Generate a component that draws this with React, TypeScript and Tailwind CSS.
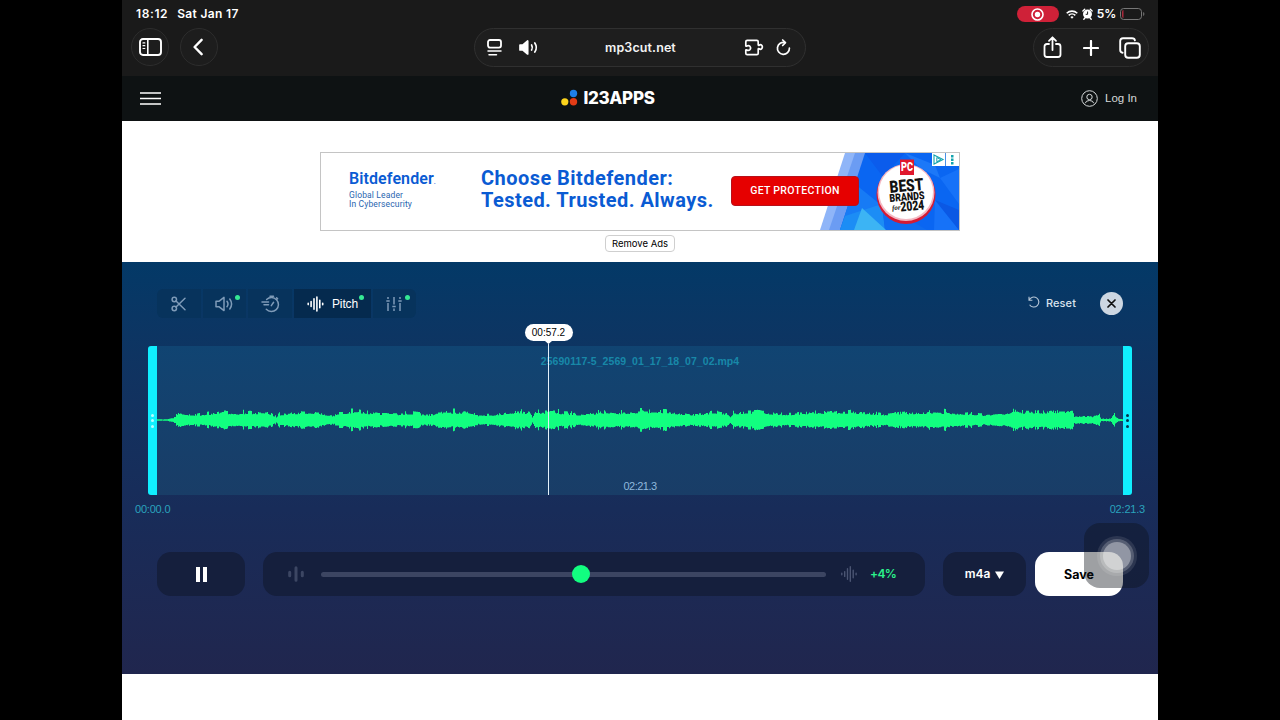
import type { ReactNode } from "react";
import { clsx } from "clsx";

const SANS = "font-['Inter','Liberation_Sans',sans-serif]";
const ARIAL = "font-['Liberation_Sans',Arial,sans-serif]";
const AD_FONT = "font-['Roboto','Open_Sans',sans-serif]";

const WAVE_WIDTH = 966;

// [x, half height] control points of the loudness envelope
const ENVELOPE: [number, number][] = [
  [0, 0.8], [9, 0.8], [17, 2.5], [20, 6], [23, 8], [28, 6.5], [40, 5], [58, 7.5], [64, 9],
  [76, 6.5], [92, 8], [102, 7.5], [113, 7], [119, 3], [122, 6], [135, 7], [147, 8.5], [162, 7],
  [177, 4.5], [180, 7.5], [202, 9], [222, 6.5], [240, 6], [252, 7.5], [275, 5], [280, 8], [302, 8.5],
  [315, 7], [319, 5], [325, 5], [345, 6.5], [362, 9], [374, 6.5], [375, 3], [379, 8.5], [396, 8.5],
  [415, 6.5], [432, 5.5], [444, 8.5], [465, 7.5], [482, 9], [505, 9], [520, 7.5], [534, 5.5], [556, 7.5],
  [571, 6], [573, 3.5], [576, 7.5], [600, 8.5], [624, 6], [645, 7], [670, 8.5], [705, 8],
  [725, 6], [750, 7.5], [775, 8.5], [790, 8], [825, 5.5], [848, 7], [860, 11], [864, 8.5],
  [880, 8], [895, 9], [915, 9], [917, 4], [926, 4], [936, 3.5], [941, 6.5], [944, 1.2], [953, 1.5],
  [957, 5.5], [961, 1.5], [965, 1],
];

function envelopeAt(x: number): number {
  const i = ENVELOPE.findIndex(([px]) => px >= x);
  if (i <= 0) return ENVELOPE[0][1];
  const [x0, y0] = ENVELOPE[i - 1];
  const [x1, y1] = ENVELOPE[i];
  return y0 + ((y1 - y0) * (x - x0)) / (x1 - x0);
}

function buildWavePath(): string {
  let seed = 4177;
  const random = () => {
    seed = (seed * 16807) % 2147483647;
    return seed / 2147483647;
  };
  let d = "";
  let level = 0.9;
  for (let x = 0; x < WAVE_WIDTH; x++) {
    if (random() > 0.35) level = 0.74 + random() * random() * 0.66;
    const base = envelopeAt(x);
    const up = base * level;
    const down = base * (level * 0.85 + 0.1 + random() * 0.1);
    d += `M${x} ${(30 - up).toFixed(1)}h1V${(30 + down).toFixed(1)}h-1z`;
  }
  return d;
}

const wavePath = buildWavePath();

function StatusBar() {
  return (
    <div className="flex h-7 items-center pr-[13px] pl-[14px] text-[12px] font-semibold">
      <span className="tracking-[0.6px]">18:12</span>
      <span className="ml-[9px] tracking-[0.35px]">Sat Jan 17</span>
      <div className="ml-auto flex items-center">
        <div className="flex h-4 w-[42px] items-center justify-center rounded-full bg-[#cf2138]">
          <svg width="13" height="13" viewBox="0 0 13 13" fill="none">
            <circle cx="6.5" cy="6.5" r="5.5" stroke="#fff" strokeWidth="1.6" />
            <circle cx="6.5" cy="6.5" r="2.7" fill="#fff" />
          </svg>
        </div>
        <svg className="ml-[7px]" width="12" height="9" viewBox="0 0 12 9" fill="none" stroke="#fff" strokeWidth="1.6">
          <path d="M.7 3.3a7.6 7.6 0 0 1 10.6 0M2.7 5.4a4.7 4.7 0 0 1 6.6 0" />
          <path d="M6 8.8 4.4 7.1a2.3 2.3 0 0 1 3.2 0z" fill="#fff" stroke="none" />
        </svg>
        <svg className="ml-[4px]" width="11" height="12" viewBox="0 0 11 12">
          <circle cx="5.5" cy="6.1" r="4.5" fill="#fff" />
          <path d="M.9 3 2.7 1.3M10.1 3 8.3 1.3M1.8 11.3l1.2-1.4M9.2 11.3 8 9.9" stroke="#fff" strokeWidth="1.4" strokeLinecap="round" />
          <path d="M5.6 3.5v2.8H3.7" stroke="#1a1a1a" fill="none" />
        </svg>
        <span className="ml-[4px] tracking-[-0.2px]">5%</span>
        <svg className="ml-[4px]" width="25" height="12" viewBox="0 0 25 12" fill="none">
          <rect x=".5" y=".5" width="21" height="11" rx="3.2" stroke="#777" />
          <path d="M2 4q0-2 1.500-2v8Q2 10 2 8z" fill="#a8283a" />
          <path d="M23.200 4v4q1.200-.7 1.200-2t-1.200-2" fill="#777" />
        </svg>
      </div>
    </div>
  );
}

function BrowserToolbar() {
  return (
    <div className="grid h-12 grid-cols-[1fr_331px_1fr] items-start">
      <div className="flex gap-[11px] pl-[9px]">
        <div className="flex size-[38px] items-center justify-center rounded-full border border-[#2d2d2d] bg-[#1d1d1d]">
          <svg width="23" height="18" viewBox="0 0 23 18" fill="none" stroke="#fff" strokeLinecap="round">
            <rect x="1" y="1" width="21" height="16" rx="3" strokeWidth="1.9" />
            <path d="M8.8 1v16" strokeWidth="1.6" />
            <path d="M4 4.9h1.8M4 7.700h1.8M4 10.500h1.8" strokeWidth="1.2" />
          </svg>
        </div>
        <div className="flex size-[38px] items-center justify-center rounded-full border border-[#2d2d2d] bg-[#1d1d1d]">
          <svg className="-ml-[3px]" width="10" height="18" viewBox="0 0 10 18" fill="none" stroke="#fff" strokeWidth="2.4" strokeLinecap="round" strokeLinejoin="round">
            <path d="M8.600 1.800 1.600 9l7 7.200" />
          </svg>
        </div>
      </div>

      <div className="-ml-px flex h-[39px] items-center rounded-full border border-[#303030] bg-[#1e1e1e] pr-[14px] pl-[12px]">
        <svg width="15" height="17" viewBox="0 0 15 17" fill="none" stroke="#fff" strokeLinecap="round">
          <rect x="1" y="1" width="13" height="7.6" rx="2" strokeWidth="1.8" />
          <path d="M1 12h13M2 15.700h7.500" strokeWidth="1.5" />
        </svg>
        <svg className="ml-[17px]" width="20" height="15" viewBox="0 0 20 15" fill="none" stroke="#fff" strokeWidth="1.7" strokeLinecap="round">
          <path d="M1 5h3L8.700 1v13L4 10H1z" fill="#fff" strokeLinejoin="round" />
          <path d="M12.600 5q1.500 2.500 0 5M15.800 3q3 4.500 0 9" />
        </svg>
        <span className="flex-1 pt-px pr-px text-center text-[12.5px] font-semibold tracking-[0.1px] text-[#f4f4f4]">
          mp3cut.net
        </span>
        <svg width="20" height="17" viewBox="0 0 20 17" fill="none" stroke="#fff" strokeWidth="1.7" strokeLinejoin="round">
          <path d="M3.200 1.400h9.600q1.400 0 1.400 1.400v3.100q.3.700 1 .3 1.400-1 2.500.1 1.300 1.700 0 3.400-1.100 1.100-2.500.1-.7-.4-1 .3v4.200q0 1.400-1.400 1.400H3.200q-1.400 0-1.400-1.400v-3.100q.3-.7 1-.3 1.700 1 3-.1 1.600-1.800 0-3.600-1.300-1.100-3-.1-.7.400-1-.3v-4q0-1.400 1.400-1.400z" />
        </svg>
        <svg className="ml-[12px]" width="15" height="17" viewBox="0 0 15 17" fill="none" stroke="#fff" strokeWidth="1.7" strokeLinecap="round" strokeLinejoin="round">
          <path d="M13.400 9.200A6 6 0 1 1 9 3.600" />
          <path d="M6.700 1 9.400 3.700 6.700 6.500" />
        </svg>
      </div>

      <div className="flex justify-end pr-[9px]">
        <div className="flex h-[39px] w-[116px] items-center justify-between rounded-full border border-[#2d2d2d] bg-[#1d1d1d] pr-[7px] pl-[9px]">
          <svg width="19" height="23" viewBox="0 0 19 23" fill="none" stroke="#fff" strokeWidth="1.8" strokeLinecap="round" strokeLinejoin="round">
            <path d="M6 8H4Q1.500 8 1.500 10.500v8q0 2.500 2.500 2.500h11q2.500 0 2.500-2.500v-8Q17.500 8 15 8h-2M9.500 14V1.500M6 4.800l3.500-3.500L13 4.800" />
          </svg>
          <svg width="16" height="16" viewBox="0 0 16 16" stroke="#fff" strokeWidth="2.2" strokeLinecap="round">
            <path d="M8 1v14M1 8h14" />
          </svg>
          <svg width="22" height="22" viewBox="0 0 22 22" fill="none" stroke="#fff" strokeWidth="1.9" strokeLinecap="round">
            <rect x="6.2" y="6.2" width="14.6" height="14.6" rx="3" />
            <path d="M3.600 15.700Q1.200 15.500 1.200 13V4Q1.200 1.200 4 1.200h9Q15.700 1.200 15.900 3.400" />
          </svg>
        </div>
      </div>
    </div>
  );
}

function SiteHeader() {
  return (
    <header className="grid h-[45px] grid-cols-3 items-center bg-[#0e1213] pr-[21px] pl-[18px]">
      <svg width="21" height="13" viewBox="0 0 21 13" stroke="#fff" strokeWidth="1.6">
        <path d="M0 1h21M0 6.500h21M0 12h21" />
      </svg>
      <div className="mr-[61px] flex items-center justify-center pb-px">
        <svg className="-mt-[2px]" width="17" height="17" viewBox="0 0 17 17">
          <circle cx="12.5" cy="4.5" r="3.7" fill="#1e7fe8" />
          <circle cx="3.8" cy="12.8" r="3.6" fill="#fcd41c" />
          <circle cx="12.5" cy="12.8" r="3.7" fill="#e23c16" />
        </svg>
        <span className="ml-[5px] font-['Inter',sans-serif] text-[17px] leading-none font-extrabold tracking-[-0.3px]">
          I23APPS
        </span>
      </div>
      <div className="flex items-center justify-end gap-[7px] text-[11.5px] text-[#d5d9da]">
        <svg width="17" height="17" viewBox="0 0 17 17" fill="none" stroke="#d5d9da" strokeWidth="1">
          <circle cx="8.5" cy="8.5" r="7.8" />
          <circle cx="8.5" cy="7" r="2.7" />
          <path d="M4.300 13.200q.5-2.700 4.200-2.700t4.200 2.700" />
        </svg>
        <span className={clsx("pt-px", ARIAL)}>Log In</span>
      </div>
    </header>
  );
}

function AdBadgeArt() {
  return (
    <svg className="absolute top-0 right-0" width="139" height="77" viewBox="820 153 139 77">
      <path d="M845 153h22l-25 77h-22z" fill="#8fb5f8" />
      <path d="M855 153h12l-25 77h-13z" fill="#6b9cf3" />
      <path d="M865 153h94v77H840z" fill="#0a66f2" />
      <path d="m855 184 31 25-46 21z" fill="#177bf5" />
      <path d="m845 216 37-12 3 26h-45z" fill="#1c8df5" />
      <path d="m882 204 45 26h-42z" fill="#0f6cf0" />
      <path d="m862 208 24 22h-32z" fill="#3cb4f4" />
      <path d="m940 178 19 26v-35zM935 200l24 30h-25z" fill="#1672f8" />
      <path d="m865 153 40 0-22 24z" fill="#0b5cec" />
      <path d="m935 200 24 10v20z" fill="#0b58e4" />
      <path d="m905 153 30 12 5 13-20-10z" fill="#1c78f8" />
      <circle cx="906" cy="194.5" r="29.5" fill="#d51b35" />
      <circle cx="906" cy="192.5" r="28.5" fill="#f3b9c3" />
      <circle cx="906" cy="192" r="27" fill="#fff" />
      <rect x="900" y="159.5" width="14" height="15.5" fill="#e0182d" />
      <text x="907" y="171" textAnchor="middle" fontFamily="Roboto, sans-serif" fontSize="13" fontWeight="900" fill="#fff" textLength="12" lengthAdjust="spacingAndGlyphs">PC</text>
      <g transform="rotate(-5 906 192)" fontFamily="Roboto, sans-serif" fontWeight="900" fill="#111" textAnchor="middle">
        <text x="907" y="191.5" fontSize="17" textLength="34" lengthAdjust="spacingAndGlyphs">BEST</text>
        <text x="906.5" y="200.5" fontSize="11" textLength="35" lengthAdjust="spacingAndGlyphs">BRANDS</text>
        <text x="895" y="209" fontSize="7" fontFamily="Liberation Serif, serif" fontStyle="italic" fontWeight="700">for</text>
        <text x="911" y="211" fontSize="13.5" textLength="24" lengthAdjust="spacingAndGlyphs">2024</text>
      </g>
      <path d="M932 153h27v13h-27z" fill="#fff" />
      <path d="M945.500 153v13" stroke="#4a90e8" />
      <path d="m934 155 9 4.500-9 4.500z" fill="none" stroke="#12a3ae" strokeWidth="1.1" />
      <path d="m936.800 157.500 4 2.100-4 2.200z" fill="none" stroke="#12a3ae" />
      <path d="M951 155h2.500v2.500H951zM951 158.500h2.500v2.500H951zM951 162h2.500v2.500H951z" fill="#12a3ae" />
    </svg>
  );
}

function AdBanner() {
  return (
    <section className="flex h-[141px] flex-col items-center bg-white pt-[31px]">
      <div className={clsx("relative flex h-[79px] w-[640px] border border-[#c4c4c4] pl-[28px] text-[#0a5bd3]", AD_FONT)}>
        <div className="w-[132px] pt-[16px] whitespace-nowrap">
          <div className="text-[16px] leading-[20px] font-semibold tracking-[0.1px]">
            Bitdefender<span className="text-[7px]">.</span>
          </div>
          <div className="-mt-px text-[8.5px] leading-[9px] tracking-[0.15px] text-[#2a66b0]">
            Global Leader
            <br />
            In Cybersecurity
          </div>
        </div>
        <div className="pt-[13.5px] text-[20px] leading-[22px] font-bold tracking-[0.45px] whitespace-nowrap">
          Choose Bitdefender:
          <br />
          Tested. Trusted. Always.
        </div>
        <AdBadgeArt />
        <div className="absolute top-[23px] left-[410px] flex h-[30px] w-[128px] items-center justify-center rounded-[4px] border border-[#b8101a] bg-[#e60000] text-[10.5px] font-medium tracking-[0.3px] text-white">
          GET PROTECTION
        </div>
      </div>
      <button className="mt-1 flex h-[17px] w-[70px] items-center justify-center rounded-[4px] border border-[#cfcfcf] pt-px text-[9.5px] whitespace-nowrap text-black">
        Remove Ads
      </button>
    </section>
  );
}

interface ToolTabProps {
  children: ReactNode;
  active?: boolean;
  badge?: boolean;
}

function ToolTab({ children, active, badge }: ToolTabProps) {
  return (
    <div
      className={clsx(
        "relative flex h-[29px] items-center justify-center",
        active ? "w-[77px] gap-2 bg-[#052a4e] text-white" : "w-[43.5px] bg-[#07335c] text-[#7f9bb8]"
      )}
    >
      {children}
      {badge && <span className="absolute top-[6px] right-[6.5px] size-[5px] rounded-full bg-[#35e994]" />}
    </div>
  );
}

function ToolTabs() {
  return (
    <div className="flex gap-[2px] overflow-hidden rounded-md">
      <ToolTab>
        <svg width="16" height="16" viewBox="0 0 16 16" fill="none" stroke="currentColor" strokeWidth="1.5" strokeLinecap="round">
          <circle cx="3.3" cy="3.5" r="2.2" />
          <circle cx="3.3" cy="12.5" r="2.2" />
          <path d="M5 5 14 13.700M5 11 14 2.300" />
        </svg>
      </ToolTab>
      <ToolTab badge>
        <svg width="19" height="16" viewBox="0 0 19 16" fill="none" stroke="currentColor" strokeWidth="1.5" strokeLinecap="round" strokeLinejoin="round">
          <path d="M1 5.200h3.200L9 1.400v13.200l-4.800-3.800H1z" />
          <path d="M12 5.300q2 2.700 0 5.400M14.800 3q3.600 5 0 10" />
        </svg>
      </ToolTab>
      <ToolTab>
        <svg className="ml-[2px]" width="19" height="18" viewBox="0 0 19 18" fill="none" stroke="currentColor" strokeWidth="1.5" strokeLinecap="round">
          <path d="M5.600 4.500a7 7 0 1 1-.3 9.800M9 1.200h3.500M15.600 2.800l1 1M1 7h6.500M3 9.700h4.500M12.600 7.300l-2.300 3.300" />
        </svg>
      </ToolTab>
      <ToolTab active badge>
        <svg className="ml-px" width="17" height="16" viewBox="0 0 17 16" stroke="currentColor" strokeWidth="1.6" strokeLinecap="round">
          <path d="M1.200 7.400v1.200M4.100 5.600v4.800M7 2.700v10.600M9.900 1v14M12.800 4.200v7.600M15.700 7.200v1.600" />
        </svg>
        <span className={clsx("text-[12px] tracking-[-0.1px]", ARIAL)}>Pitch</span>
      </ToolTab>
      <ToolTab badge>
        <svg width="16" height="16" viewBox="0 0 16 16" fill="none" stroke="currentColor" strokeWidth="1.5">
          <path d="M2 1v2M2 7v8M.3 4.900h3.400M8 1v7.500M8 12.500V15M6.300 10.600h3.400M14 1v2M14 7v8M12.300 4.900h3.400" />
        </svg>
      </ToolTab>
    </div>
  );
}

function Handle({ side }: { side: "left" | "right" }) {
  return (
    <div
      className={clsx(
        "flex w-[9px] flex-col items-center justify-center gap-[2.5px] bg-[#10efff]",
        side === "left" ? "rounded-l-[3px] text-[#b8fbff]" : "rounded-r-[3px] text-[#06344c]"
      )}
    >
      {[0, 1, 2].map((i) => (
        <span key={i} className="size-[3px] rounded-full bg-current" />
      ))}
    </div>
  );
}

function Waveform() {
  return (
    <div className="flex h-[149px] px-[26px]">
      <Handle side="left" />
      <div className="relative flex flex-1 flex-col items-center justify-between bg-linear-to-b from-[#104472] to-[#193d67]">
        <span className={clsx("pt-[8px] text-[10.5px] leading-[15px] font-bold tracking-[0.05px] text-[#1888a8]", ARIAL)}>
          25690117-5_2569_01_17_18_07_02.mp4
        </span>
        <svg className="block" width="966" height="60" viewBox="0 0 966 60">
          <path d={wavePath} fill="#12ff80" />
        </svg>
        <span className={clsx("pt-[8px] pb-px text-[11px] leading-[15px] tracking-[-0.5px] text-[#8fb8dc]", ARIAL)}>
          02:21.3
        </span>
        <div className="absolute -top-[22px] left-[367px] flex h-[171px] w-[49px] flex-col items-center">
          <div className={clsx("flex h-[17px] w-[48px] shrink-0 items-center justify-center rounded-full bg-white text-[10px] text-black", ARIAL)}>
            00:57.2
          </div>
          <svg width="7" height="3" viewBox="0 0 7 3" className="shrink-0">
            <path d="M0 0h7L3.500 3z" fill="#fff" />
          </svg>
          <div className="w-px flex-1 bg-[#e4f1fa]" />
        </div>
      </div>
      <Handle side="right" />
    </div>
  );
}

function Controls() {
  return (
    <div className="flex h-[44px] pl-[35px] text-white">
      <div className="flex w-[88px] items-center justify-center gap-[3px] rounded-[14px] bg-[#151f3d]">
        <span className="h-[15px] w-[4px] bg-white" />
        <span className="h-[15px] w-[4px] bg-white" />
      </div>
      <div className="ml-[18px] flex w-[662px] items-center rounded-[14px] bg-[#151f3d] pl-[25px]">
        <svg width="16" height="16" viewBox="0 0 16 16" stroke="#3c4663" strokeWidth="3" strokeLinecap="round">
          <path d="M1.700 6.200v3.600M8 1.700v12.600M14.300 6.200v3.600" />
        </svg>
        <div className="relative ml-[17px] h-[5px] w-[505px] rounded-full bg-[#3c4562]">
          <span className="absolute -top-[6.5px] left-[251px] size-[18px] rounded-full bg-[#12fd80]" />
        </div>
        <svg className="ml-[15px]" width="16" height="16" viewBox="0 0 16 16" stroke="#4b5573" strokeWidth="1.4" strokeLinecap="round">
          <path d="M.8 7.200v1.600M3.700 5.600v4.800M6.500 2.700v10.600M9.300.8v14.400M12.200 4.200v7.600M15.100 7.200v1.600" />
        </svg>
        <span className="ml-[13px] text-[12px] font-semibold tracking-[-0.6px] text-[#2bf28c]">+4%</span>
      </div>
      <div className="ml-[18px] flex w-[83px] items-center justify-center gap-[5px] rounded-[14px] bg-[#151f3d] text-[12px] font-semibold">
        m4a
        <svg className="mt-[2px]" width="9" height="8" viewBox="0 0 9 8">
          <path d="M0 .5h9L4.500 8z" fill="#fff" />
        </svg>
      </div>
      <button className="ml-[9px] w-[88px] rounded-[14px] bg-white pt-[2px] text-[12.5px] font-bold text-black">Save</button>
    </div>
  );
}

function Editor() {
  return (
    <section className="relative h-[412px] bg-linear-to-b from-[#033967] via-[#182c59] via-60% to-[#20264e] pt-[27px]">
      <div className="flex h-[29px] items-center px-[35px]">
        <ToolTabs />
        <div className="ml-auto flex items-center text-[11px] font-medium tracking-[0.1px] text-[#d9e3ee]">
          <svg className="mb-[3px]" width="12" height="12" viewBox="0 0 12 12" fill="none" stroke="#b7c7d8" strokeWidth="1.1">
            <path d="M1 .8v3.400h3.400M1.200 4.100A5 5 0 1 1 1.600 8.700" />
          </svg>
          <span className="ml-[6px]">Reset</span>
        </div>
        <div className="ml-[24px] flex size-[23px] items-center justify-center rounded-full bg-[#cdd7e2]">
          <svg width="9" height="9" viewBox="0 0 9 9" stroke="#111" strokeWidth="1.7" strokeLinecap="round">
            <path d="m1 1 7 7M8 1 1 8" />
          </svg>
        </div>
      </div>
      <div className="pt-[28px]">
        <Waveform />
      </div>
      <div className={clsx("flex h-[57px] justify-between px-[13px] pt-[7px] text-[11px] leading-[15px] tracking-[-0.2px] text-[#2aa3bd]", ARIAL)}>
        <span>00:00.0</span>
        <span>02:21.3</span>
      </div>
      <Controls />
      <div className="absolute top-[261px] right-[9px] flex size-[65px] items-center justify-center rounded-[16px] bg-[#0d1118]/40">
        <div className="flex size-[40px] items-center justify-center rounded-full bg-white/10">
          <div className="flex size-[34px] items-center justify-center rounded-full bg-white/20">
            <div className="size-[28px] rounded-full bg-white/35" />
          </div>
        </div>
      </div>
    </section>
  );
}

export default function App() {
  return (
    <div className="flex h-[720px] w-[1280px] justify-center overflow-hidden bg-black">
      <main className={clsx("flex w-[1036px] flex-col bg-white text-white", SANS)}>
        <div className="bg-[#1a1a1a]">
          <StatusBar />
          <BrowserToolbar />
        </div>
        <SiteHeader />
        <AdBanner />
        <Editor />
      </main>
    </div>
  );
}
